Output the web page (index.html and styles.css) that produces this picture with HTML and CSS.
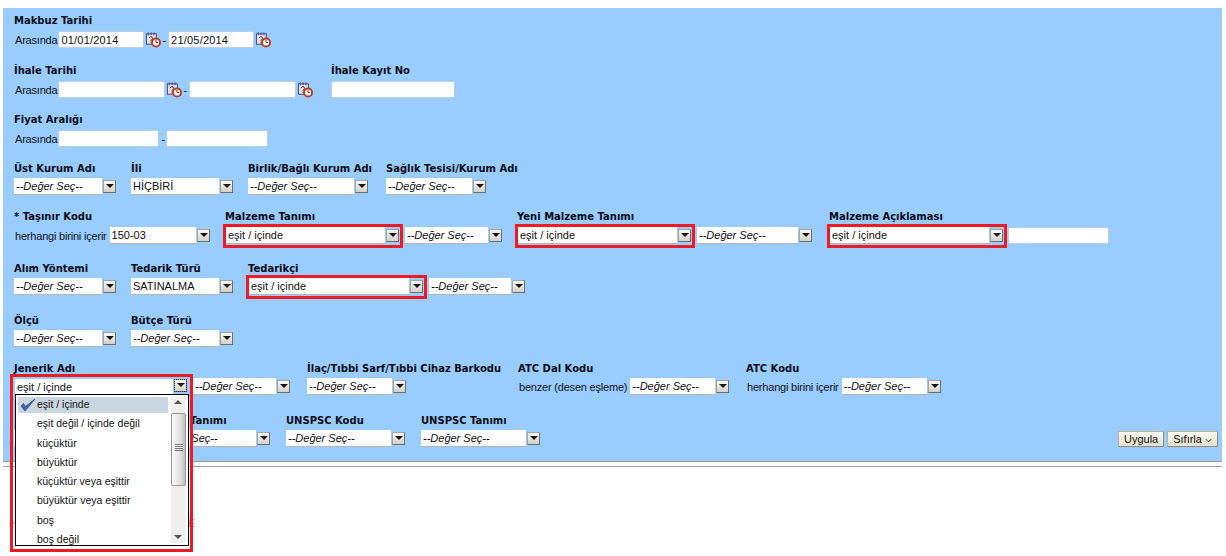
FILE: index.html
```html
<!DOCTYPE html>
<html lang="tr">
<head>
  <meta charset="UTF-8" />
  <title>Makbuz Arama</title>
  <link rel="stylesheet" href="styles.css">
</head>
<body>
  <svg class="defs" width="0" height="0">
    <symbol id="cal" viewBox="0 0 17 17">
      <rect x="1.500" y="2.500" width="10.500" height="11" fill="#e2e2ee" stroke="#3f3f70"/>
      <path d="M3.500 1v3M6.500 1v3M9.500 1v3" stroke="#3f3f70" fill="none"/>
      <path d="M4.500 7c0-2 3.500-2 3.500 0 0 1.300-1.700 1.300-1.700 3M6.300 11v1" stroke="#333" fill="none"/>
      <circle cx="11.700" cy="11.700" r="4.300" fill="#fff" stroke="#c0391c" stroke-width="2"/>
      <path d="M11.700 9v2.700h2.300" stroke="#6a2010" fill="none"/>
    </symbol>
  </svg>

  <div class="panel">
    <div class="row r1">
      <div class="field">
        <label>Makbuz Tarihi</label>
        <div class="ctl">
          <span class="txt">Arasında</span>
          <input class="inp w-86" value="01/01/2014">
          <svg class="ico"><use href="#cal"/></svg><span class="dash">-</span>
          <input class="inp w-86" value="21/05/2014">
          <svg class="ico"><use href="#cal"/></svg>
        </div>
      </div>
    </div>

    <div class="row r2">
      <div class="field w-317">
        <label>İhale Tarihi</label>
        <div class="ctl">
          <span class="txt">Arasında</span>
          <input class="inp w-107">
          <svg class="ico"><use href="#cal"/></svg><span class="dash">-</span>
          <input class="inp w-107">
          <svg class="ico"><use href="#cal"/></svg>
        </div>
      </div>
      <div class="field">
        <label>İhale Kayıt No</label>
        <div class="ctl"><input class="inp w-124"></div>
      </div>
    </div>

    <div class="row r3">
      <div class="field">
        <label>Fiyat Aralığı</label>
        <div class="ctl">
          <span class="txt">Arasında</span>
          <input class="inp w-101">
          <span class="dash wide">-</span>
          <input class="inp w-102">
        </div>
      </div>
    </div>

    <div class="row r4">
      <div class="field w-117">
        <label>Üst Kurum Adı</label>
        <div class="ctl"><div class="sel w-88"><i>--Değer Seç--</i></div><b class="arrow"></b></div>
      </div>
      <div class="field w-117">
        <label>İli</label>
        <div class="ctl"><div class="sel w-88">HİÇBİRİ</div><b class="arrow"></b></div>
      </div>
      <div class="field w-138">
        <label>Birlik/Bağlı Kurum Adı</label>
        <div class="ctl"><div class="sel w-106"><i>--Değer Seç--</i></div><b class="arrow"></b></div>
      </div>
      <div class="field">
        <label>Sağlık Tesisi/Kurum Adı</label>
        <div class="ctl"><div class="sel w-86"><i>--Değer Seç--</i></div><b class="arrow"></b></div>
      </div>
    </div>

    <div class="row r5">
      <div class="field w-211">
        <label>* Taşınır Kodu</label>
        <div class="ctl"><span class="txt long">herhangi birini içerir</span><div class="sel w-86">150-03</div><b class="arrow"></b></div>
      </div>
      <div class="field w-292">
        <label>Malzeme Tanımı</label>
        <div class="ctl">
          <div class="mark"><div class="sel w-159">eşit / içinde</div><b class="arrow"></b></div>
          <div class="sel w-83"><i>--Değer Seç--</i></div><b class="arrow"></b>
        </div>
      </div>
      <div class="field w-312">
        <label>Yeni Malzeme Tanımı</label>
        <div class="ctl">
          <div class="mark"><div class="sel w-159">eşit / içinde</div><b class="arrow"></b></div>
          <div class="sel w-101"><i>--Değer Seç--</i></div><b class="arrow"></b>
        </div>
      </div>
      <div class="field">
        <label>Malzeme Açıklaması</label>
        <div class="ctl">
          <div class="mark"><div class="sel w-159">eşit / içinde</div><b class="arrow"></b></div>
          <input class="inp after-mark w-101">
        </div>
      </div>
    </div>

    <div class="row r6">
      <div class="field w-117">
        <label>Alım Yöntemi</label>
        <div class="ctl"><div class="sel w-88"><i>--Değer Seç--</i></div><b class="arrow"></b></div>
      </div>
      <div class="field w-117">
        <label>Tedarik Türü</label>
        <div class="ctl"><div class="sel w-88">SATINALMA</div><b class="arrow"></b></div>
      </div>
      <div class="field">
        <label>Tedarikçi</label>
        <div class="ctl">
          <div class="mark"><div class="sel w-160">eşit / içinde</div><b class="arrow"></b></div>
          <div class="sel w-82"><i>--Değer Seç--</i></div><b class="arrow"></b>
        </div>
      </div>
    </div>

    <div class="row r7">
      <div class="field w-117">
        <label>Ölçü</label>
        <div class="ctl"><div class="sel w-88"><i>--Değer Seç--</i></div><b class="arrow"></b></div>
      </div>
      <div class="field">
        <label>Bütçe Türü</label>
        <div class="ctl"><div class="sel w-88"><i>--Değer Seç--</i></div><b class="arrow"></b></div>
      </div>
    </div>

    <div class="row r8">
      <div class="field w-293">
        <label>Jenerik Adı</label>
        <div class="ctl">
          <div class="mark mark-open">
            <div class="sel w-158">eşit / içinde</div><b class="arrow focus"></b>
            <div class="drop">
              <ul>
                <li class="on"><svg class="tick" viewBox="0 0 16 14"><path d="M1 8l4 5L15 1 5.500 8.500 3.500 5.500z" fill="#3f68a8" stroke="#2c4f88" stroke-width=".8"/></svg>eşit / içinde</li>
                <li>eşit değil / içinde değil</li>
                <li>küçüktür</li>
                <li>büyüktür</li>
                <li>küçüktür veya eşittir</li>
                <li>büyüktür veya eşittir</li>
                <li>boş</li>
                <li>boş değil</li>
              </ul>
              <div class="scroll"><span class="up"></span><div class="thumb"><em></em></div><span class="down"></span></div>
            </div>
          </div>
          <div class="sel w-83"><i>--Değer Seç--</i></div><b class="arrow"></b>
        </div>
      </div>
      <div class="field w-211">
        <label>İlaç/Tıbbi Sarf/Tıbbi Cihaz Barkodu</label>
        <div class="ctl"><div class="sel w-85"><i>--Değer Seç--</i></div><b class="arrow"></b></div>
      </div>
      <div class="field w-228">
        <label>ATC Dal Kodu</label>
        <div class="ctl"><span class="txt long">benzer (desen eşleme)</span><div class="sel w-85"><i>--Değer Seç--</i></div><b class="arrow"></b></div>
      </div>
      <div class="field">
        <label>ATC Kodu</label>
        <div class="ctl"><span class="txt long">herhangi birini içerir</span><div class="sel w-85"><i>--Değer Seç--</i></div><b class="arrow"></b></div>
      </div>
    </div>

    <div class="row r9">
      <div class="field w-272">
        <label class="behind">Tanımı</label>
        <div class="ctl"><div class="sel w-242"><i class="behind">--Değer Seç--</i></div><b class="arrow"></b></div>
      </div>
      <div class="field w-135">
        <label>UNSPSC Kodu</label>
        <div class="ctl"><div class="sel w-105"><i>--Değer Seç--</i></div><b class="arrow"></b></div>
      </div>
      <div class="field">
        <label>UNSPSC Tanımı</label>
        <div class="ctl"><div class="sel w-105"><i>--Değer Seç--</i></div><b class="arrow"></b></div>
      </div>
      <div class="actions">
        <button>Uygula</button>
        <button>Sıfırla <svg class="chev" viewBox="0 0 8 5"><path d="M.5 .5L4 4 7.500 .5" fill="none" stroke="#333"/></svg></button>
      </div>
    </div>
  </div>

  <div class="rule"></div>
  <!-- only the ends of this line stick out from under the open list -->
  <p class="note"><span>e</span><span>E</span></p>
</body>
</html>
```

FILE: styles.css
```css
* { box-sizing: border-box; }
html, body { height: 100%; overflow: hidden; }
body {
  margin: 0;
  padding: 8px 4px 0 3px;
  background: #fff;
  font-family: 'Liberation Sans', sans-serif;
  font-size: 11px;
  color: #111;
}

.defs { position: absolute; }

.panel {
  height: 454px;
  background: #99ccff;
  border-bottom: 1px solid #9a9a9a;
  padding: 6px 4px 0 11px;
}

.row { display: flex; align-items: flex-start; }
.r1 { height: 49px; }
.r2 { height: 49px; }
.r3 { height: 49px; }
.r4 { height: 48px; }
.r5 { height: 52px; }
.r6 { height: 52px; }
.r7 { height: 48px; }
.r8 { height: 52px; }

.field { flex: none; }
.field label {
  display: block;
  height: 17px;
  padding-top: 1px;
  font-family: 'DejaVu Sans', sans-serif;
  font-size: 10px;
  font-weight: bold;
  line-height: 13px;
  color: #0c0c14;
}
.r1 .field label { padding-top: 0; }
.r2 .field label, .r3 .field label, .r5 .field label { height: 18px; }
.field label.behind { padding-left: 176px; }

.ctl { display: flex; align-items: center; height: 17px; white-space: nowrap; }
.txt { margin: 0 1px; letter-spacing: -.2px; }
.txt.long { margin-right: 3px; }
.dash { margin: 0 2px 0 1px; }
.dash.wide { margin: 0 1px 0 2px; }

.inp {
  height: 17px;
  padding: 0 2px;
  border: 1px solid #b9cfe6;
  border-radius: 2px;
  background: #fff;
  font: 11px 'Liberation Sans', sans-serif;
  letter-spacing: .2px;
  color: #111;
  outline: none;
}
.inp.after-mark { margin-left: -1px; }
.ico { width: 16px; height: 17px; flex: none; margin-left: 1px; }

.sel {
  flex: none;
  height: 17px;
  padding: 0 2px;
  background: #fff;
  border-bottom: 1px solid #b5b5b5;
  line-height: 17px;
  overflow: hidden;
}
.sel i { display: block; }
.sel i.behind { padding-left: 135px; }

.arrow {
  flex: none;
  position: relative;
  width: 13px;
  height: 13px;
  margin: 0 15px 0 1px;
  background: linear-gradient(#f8f8f4, #d4d0c8);
  border: 1px solid #a8a69c;
  border-right-color: #6f6e66;
  border-bottom-color: #6f6e66;
}
.arrow::after {
  content: '';
  position: absolute;
  left: 2px;
  top: 3px;
  border: 4px solid transparent;
  border-top: 4px solid #111;
  border-bottom: 0;
}
.arrow.focus { outline: 1px dotted #333; outline-offset: -1px; }

.mark {
  position: relative;
  flex: none;
  display: flex;
  align-items: center;
  height: 24px;
  margin: 0 2px 0 -2px;
  padding: 0 1px 0 0;
  border: 3px solid #ed1c24;
}
.mark .arrow { margin: 0 0 0 1px; }
.mark-open {
  height: 178px;
  align-items: flex-start;
  align-self: flex-start;
  margin: -4px 0 0 -4px;
  z-index: 2;
  padding: 2px 3px 0 2px;
}

.drop {
  position: absolute;
  left: 2px;
  top: 17px;
  width: 174px;
  height: 152px;
  padding: 2px;
  display: flex;
  background: #fff;
  border: 1px solid #000;
}
.drop ul { flex: 1; margin: 0; padding: 0; list-style: none; }
.drop li {
  position: relative;
  height: 19.300px;
  padding-left: 19px;
  font-size: 10.500px;
  line-height: 15px;
}
.drop li.on { background: #cad6e2; height: 16px; margin-bottom: 3.300px; }
.tick { position: absolute; left: 2px; top: 1px; width: 16px; height: 14px; }

.scroll {
  flex: none;
  position: relative;
  width: 15px;
  margin-left: 3px;
  background: #f1f0ec;
}
.scroll .up, .scroll .down {
  position: absolute;
  left: 3px;
  border: 4px solid transparent;
}
.scroll .up { top: 3px; border-top: 0; border-bottom-color: #555; }
.scroll .down { bottom: 4px; border-bottom: 0; border-top-color: #555; }
.thumb {
  position: absolute;
  left: 0;
  top: 16px;
  width: 15px;
  height: 73px;
  border: 1px solid #999;
  border-radius: 2px;
  background: linear-gradient(to right, #fdfdfd, #dcdcdc 70%, #bdbdbd);
}
.thumb em {
  position: absolute;
  left: 3px;
  top: 30px;
  width: 8px;
  height: 7px;
  background: repeating-linear-gradient(#777 0 1px, #eee 1px 2px);
}

.actions { display: flex; gap: 3px; margin: 18px 0 0 auto; }
.actions button {
  height: 16px;
  padding: 0 5px;
  background: linear-gradient(#fdfbf0, #e6e1cd);
  border: 1px solid #b8b39c;
  border-right-color: #8f8b78;
  border-bottom-color: #8f8b78;
  font: 11px 'Liberation Sans', sans-serif;
  color: #111;
  white-space: nowrap;
}
.chev { width: 7px; height: 5px; }

.w-82 { width: 82px; }
.w-83 { width: 83px; }
.w-85 { width: 85px; }
.w-86 { width: 86px; }
.w-88 { width: 88px; }
.w-101 { width: 101px; }
.w-102 { width: 102px; }
.w-105 { width: 105px; }
.w-106 { width: 106px; }
.w-107 { width: 107px; }
.w-117 { width: 117px; }
.w-124 { width: 124px; }
.w-135 { width: 135px; }
.w-138 { width: 138px; }
.w-158 { width: 158px; }
.w-159 { width: 159px; }
.w-160 { width: 160px; }
.w-211 { width: 211px; }
.w-228 { width: 228px; }
.w-242 { width: 242px; }
.w-272 { width: 272px; }
.w-292 { width: 292px; }
.w-293 { width: 293px; }
.w-312 { width: 312px; }
.w-317 { width: 317px; }

.rule { height: 1px; margin-top: 4px; background: #a0a09a; }
.note {
  display: flex;
  justify-content: space-between;
  width: 186px;
  margin: 50px 0 0 6px;
  color: #a89890;
  font-size: 11px;
}
```
